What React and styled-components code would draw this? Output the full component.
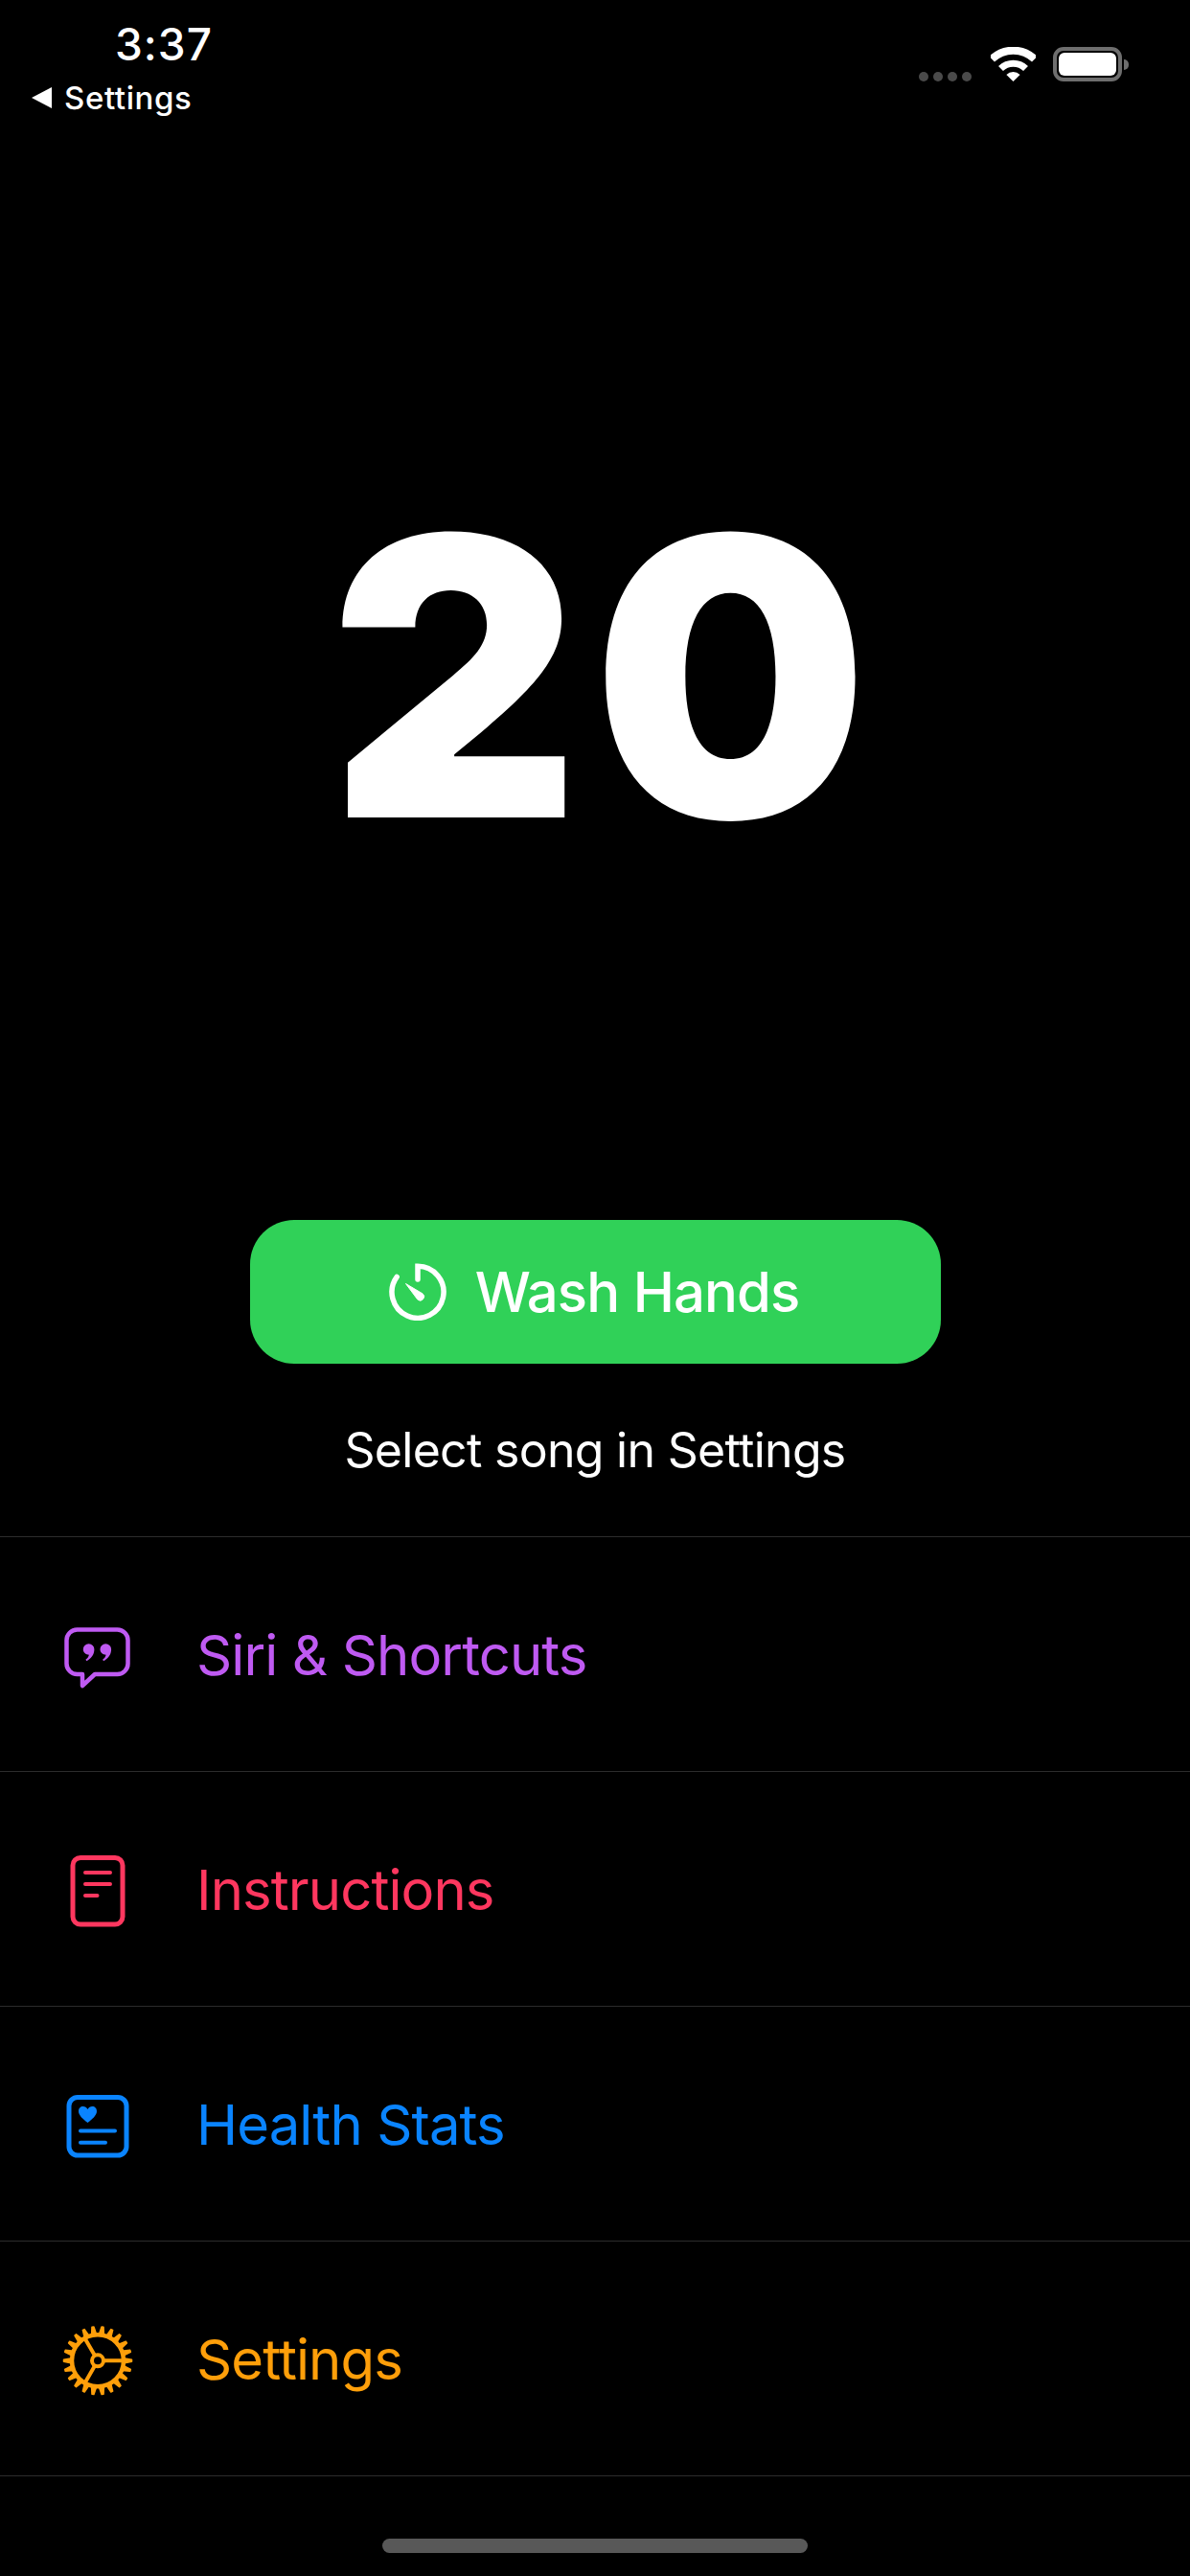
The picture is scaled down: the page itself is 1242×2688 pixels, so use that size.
import styled, { createGlobalStyle } from 'styled-components';

const GlobalStyle = createGlobalStyle`
  html, body {
    margin: 0;
    padding: 0;
    background: #000;
  }
  * {
    box-sizing: border-box;
  }
`;

const Page = styled.div`
  width: 1242px;
  height: 2688px;
  display: flex;
  flex-direction: column;
  background: #000;
  color: #fff;
  font-family: Inter, 'Noto Sans', sans-serif;
  overflow: hidden;
`;

const StatusBar = styled.header`
  height: 132px;
  flex: none;
  display: flex;
  justify-content: space-between;
  align-items: flex-start;
  padding: 18px 71px 0 33px;
`;

const StatusLeft = styled.div`
  display: flex;
  flex-direction: column;
  gap: 8px;
`;

const Time = styled.div`
  margin-left: 87px;
  font-size: 46px;
  line-height: 56px;
  font-weight: 500;
  letter-spacing: 1px;
`;

const BackLink = styled.div`
  display: flex;
  align-items: center;
  gap: 13px;
  font-size: 33px;
  line-height: 40px;
  font-weight: 500;
  letter-spacing: 0.6px;
`;

const BackArrow = styled.span`
  flex: none;
  width: 0;
  height: 0;
  border-top: 11px solid transparent;
  border-bottom: 11px solid transparent;
  border-right: 21px solid #fff;
`;

const StatusRight = styled.div`
  display: flex;
  align-items: flex-end;
  padding-top: 31px;
`;

const SignalDots = styled.div`
  display: flex;
  gap: 5px;
  margin-right: 20px;
`;

const SignalDot = styled.span`
  width: 10px;
  height: 10px;
  border-radius: 50%;
  background: #4a4a4a;
`;

const WifiIcon = styled.svg`
  width: 47px;
  height: 36px;
  margin-right: 18px;
`;

const Battery = styled.div`
  position: relative;
  width: 72px;
  height: 36px;
  padding: 2px;
  border: 4px solid #6e6e6e;
  border-radius: 11px;

  &::after {
    content: '';
    position: absolute;
    left: 70px;
    top: 9px;
    width: 5px;
    height: 11px;
    background: #6e6e6e;
    border-radius: 0 5px 5px 0;
  }
`;

const BatteryFill = styled.div`
  width: 100%;
  height: 100%;
  background: #fff;
  border-radius: 6px;
`;

const Hero = styled.section`
  height: 1141px;
  flex: none;
  display: flex;
  align-items: center;
  justify-content: center;
`;

const Counter = styled.div`
  font-size: 405px;
  line-height: 405px;
  font-weight: 900;
  letter-spacing: 13px;
  margin: 8px 0 0 21px;
`;

const Controls = styled.section`
  height: 330px;
  flex: none;
  display: flex;
  flex-direction: column;
  align-items: center;
`;

const WashButton = styled.button`
  width: 721px;
  height: 150px;
  border: none;
  border-radius: 46px;
  background: #30d158;
  color: #fff;
  display: flex;
  align-items: center;
  justify-content: center;
  gap: 30px;
  font-family: inherit;
  font-size: 58px;
  font-weight: 500;
  letter-spacing: -0.9px;
  padding: 0 2px 0 0;
`;

const ButtonIcon = styled.svg`
  width: 60px;
  height: 60px;
`;

const Hint = styled.div`
  margin-top: 60px;
  font-size: 50px;
  line-height: 60px;
  letter-spacing: -0.7px;
`;

const Menu = styled.nav`
  display: flex;
  flex-direction: column;
`;

const MenuRow = styled.div`
  height: 245px;
  flex: none;
  display: flex;
  align-items: center;
  gap: 45px;
  padding-left: 40px;
  border-top: 1px solid #2c2c2c;
  color: ${(p) => p.$color};
  font-size: 58px;
  letter-spacing: -0.9px;

  &:last-child {
    height: 246px;
    border-bottom: 1px solid #2c2c2c;
  }
`;

const MenuLabel = styled.span`
  padding-top: 2px;
`;

const MenuIcon = styled.svg`
  width: 120px;
  height: 120px;
  flex: none;
`;

const HomeBar = styled.div`
  align-self: center;
  width: 444px;
  height: 15px;
  margin-top: 65px;
  border-radius: 8px;
  background: #585858;
`;

const BubbleIcon = () => (
  <MenuIcon viewBox="0 -4 120 120">
    <path
      d="M40.5 30.5H82.5a11 11 0 0 1 11 11V66a11 11 0 0 1-11 11H59L46 89V77H40.5a11 11 0 0 1-11-11V41.5a11 11 0 0 1 11-11z"
      fill="none"
      stroke="currentColor"
      strokeWidth="4.5"
      strokeLinejoin="round"
    />
    <path
      d="M46.800 51a5.800 5.800 0 0 1 11.600 0c0 5.500-3.400 9.800-8 12.300l-1-1.600c1.800-1.200 3-2.800 3.500-5-3.400 0-6.100-2.400-6.100-5.700z"
      fill="currentColor"
    />
    <path
      d="M64.500 51a5.800 5.800 0 0 1 11.600 0c0 5.500-3.400 9.800-8 12.300l-1-1.600c1.800-1.200 3-2.800 3.500-5-3.400 0-6.100-2.400-6.100-5.700z"
      fill="currentColor"
    />
  </MenuIcon>
);

const DocIcon = () => (
  <MenuIcon viewBox="0 1 120 120">
    <rect x="36" y="28.500" width="52" height="69.500" rx="8" fill="none" stroke="currentColor" strokeWidth="5" />
    <path
      d="M49 44H75M49 56H75M49 68H61.500"
      fill="none"
      stroke="currentColor"
      strokeWidth="4"
      strokeLinecap="round"
    />
  </MenuIcon>
);

const HealthIcon = () => (
  <MenuIcon viewBox="0 -4 120 120">
    <rect x="32" y="28.500" width="60" height="60.500" rx="9" fill="none" stroke="currentColor" strokeWidth="5" />
    <path
      d="M51.500 55C47 51.500 42 47.500 42 43C42 40 44 38 46.700 38C48.700 38 50.500 39 51.500 41C52.500 39 54.300 38 56.300 38C59 38 61 40 61 43C61 47.500 56 51.500 51.500 55Z"
      fill="currentColor"
    />
    <path
      d="M44 63.500H80M44 75.700H70"
      fill="none"
      stroke="currentColor"
      strokeWidth="4"
      strokeLinecap="round"
    />
  </MenuIcon>
);

const gearTeeth = Array.from({ length: 22 }, (_, i) => (i * 360) / 22);

const GearIcon = () => (
  <MenuIcon viewBox="0 1 120 120">
    <g transform="translate(62 63.300)" fill="currentColor" stroke="currentColor">
      {gearTeeth.map((angle) => (
        <polygon
          key={angle}
          points="27,-2.600 35.500,-1 35.500,1 27,2.600"
          strokeWidth="1.500"
          strokeLinejoin="round"
          transform={`rotate(${angle})`}
        />
      ))}
      <circle r="27" fill="none" strokeWidth="4.500" />
      <circle r="6" fill="none" strokeWidth="4" />
      <path
        d="M6 0H27M-3 -5.200L-13.500 -23.400M-3 5.200L-13.500 23.400"
        fill="none"
        strokeWidth="4"
      />
    </g>
  </MenuIcon>
);

const menuItems = [
  { label: 'Siri & Shortcuts', color: '#bf5af2', Icon: BubbleIcon },
  { label: 'Instructions', color: '#ff375f', Icon: DocIcon },
  { label: 'Health Stats', color: '#0a84ff', Icon: HealthIcon },
  { label: 'Settings', color: '#ff9f0a', Icon: GearIcon },
];

export default function App() {
  return (
    <>
      <GlobalStyle />
      <Page>
        <StatusBar>
          <StatusLeft>
            <Time>3:37</Time>
            <BackLink>
              <BackArrow />
              Settings
            </BackLink>
          </StatusLeft>
          <StatusRight>
            <SignalDots>
              <SignalDot />
              <SignalDot />
              <SignalDot />
              <SignalDot />
            </SignalDots>
            <WifiIcon viewBox="0 0 47 36">
              <path
                d="M1.200 12.700A32 32 0 0 1 45.800 12.700"
                fill="none"
                stroke="#fff"
                strokeWidth="8"
              />
              <path
                d="M10.500 22.500A18.500 18.500 0 0 1 36.500 22.500"
                fill="none"
                stroke="#fff"
                strokeWidth="7"
              />
              <path d="M23.500 36L16.400 28.900A10 10 0 0 1 30.600 28.900Z" fill="#fff" />
            </WifiIcon>
            <Battery>
              <BatteryFill />
            </Battery>
          </StatusRight>
        </StatusBar>

        <Hero>
          <Counter>20</Counter>
        </Hero>

        <Controls>
          <WashButton>
            <ButtonIcon viewBox="16 14 60 60">
              <path
                d="M46 31V17.300A27 27 0 1 1 24.200 28.400"
                fill="none"
                stroke="#fff"
                strokeWidth="5.500"
                strokeLinecap="round"
              />
              <path
                d="M33.500 35.500L51.200 46A4 4 0 0 1 45.800 52Z"
                fill="#fff"
                stroke="#fff"
                strokeWidth="1"
                strokeLinejoin="round"
              />
            </ButtonIcon>
            Wash Hands
          </WashButton>
          <Hint>Select song in Settings</Hint>
        </Controls>

        <Menu>
          {menuItems.map(({ label, color, Icon }) => (
            <MenuRow key={label} $color={color}>
              <Icon />
              <MenuLabel>{label}</MenuLabel>
            </MenuRow>
          ))}
        </Menu>

        <HomeBar />
      </Page>
    </>
  );
}
